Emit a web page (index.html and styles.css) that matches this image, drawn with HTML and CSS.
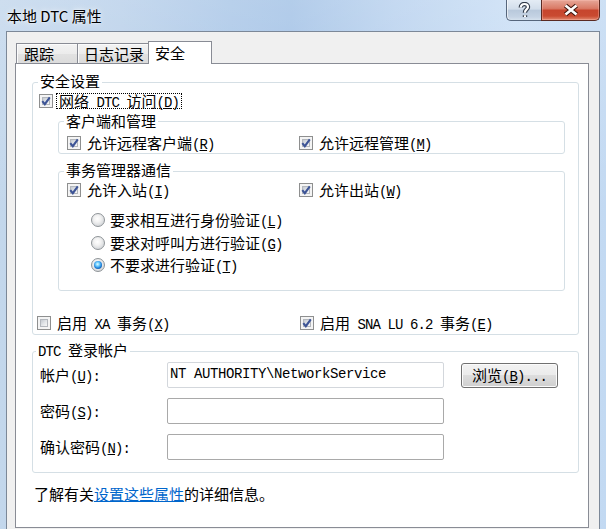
FILE: index.html
```html
<!DOCTYPE html>
<html lang="zh-CN">
<head>
<meta charset="utf-8">
<title>本地 DTC 属性</title>
<link rel="stylesheet" href="styles.css">
</head>
<body>
<div class="window">
  <div class="titlebar">
    <div class="title">本地 DTC 属性</div>
    <div class="caption">
      <div class="cap-btn help">
        <svg width="14" height="17" viewBox="0 0 14 17">
          <path d="M3.8 5.6 C3.8 3.2 5.6 2 7.4 2 C9.6 2 11 3.3 11 5 C11 7.2 8 7.6 8 10.2 V10.8 M8 13.2 V15" fill="none" stroke="#2f3948" stroke-width="4.4"/>
          <path d="M3.8 5.6 C3.8 3.2 5.6 2 7.4 2 C9.6 2 11 3.3 11 5 C11 7.2 8 7.6 8 10.2 V10.8 M8 13.2 V15" fill="none" stroke="#ffffff" stroke-width="2.2"/>
        </svg>
      </div>
      <div class="cap-btn close">
        <svg width="18" height="14" viewBox="0 0 18 14">
          <path d="M3.5 2.5 L14.5 11.5 M14.5 2.5 L3.5 11.5" fill="none" stroke="#3e140c" stroke-width="4.8"/>
          <path d="M3.5 2.5 L14.5 11.5 M14.5 2.5 L3.5 11.5" fill="none" stroke="#ffffff" stroke-width="2.6"/>
        </svg>
      </div>
    </div>
  </div>
  <div class="client">
    <div class="tabs">
      <div class="tab t1">跟踪</div>
      <div class="tab t2">日志记录</div>
      <div class="tab t3 active">安全</div>
    </div>
    <div class="page">
      <div class="group g-sec">
        <div class="legend">安全设置</div>
        <div class="chk r-net">
          <span class="cb"><i></i><svg class="tick" viewBox="0 0 12 12"><path d="M2.3 6.2 L4.8 9.2 L9.8 2.3"/></svg></span>
          <span class="focus">网络<span class="l">&nbsp;DTC&nbsp;</span>访问<span class="l">(<u>D</u>)</span></span>
        </div>
        <div class="group g-client">
          <div class="legend">客户端和管理</div>
          <div class="grid2 r-client">
            <div class="chk">
              <span class="cb"><i></i><svg class="tick" viewBox="0 0 12 12"><path d="M2.3 6.2 L4.8 9.2 L9.8 2.3"/></svg></span>
              <span>允许远程客户端<span class="l">(<u>R</u>)</span></span>
            </div>
            <div class="chk">
              <span class="cb"><i></i><svg class="tick" viewBox="0 0 12 12"><path d="M2.3 6.2 L4.8 9.2 L9.8 2.3"/></svg></span>
              <span>允许远程管理<span class="l">(<u>M</u>)</span></span>
            </div>
          </div>
        </div>
        <div class="group g-txn">
          <div class="legend">事务管理器通信</div>
          <div class="grid2 r-inout">
            <div class="chk">
              <span class="cb"><i></i><svg class="tick" viewBox="0 0 12 12"><path d="M2.3 6.2 L4.8 9.2 L9.8 2.3"/></svg></span>
              <span>允许入站<span class="l">(<u>I</u>)</span></span>
            </div>
            <div class="chk">
              <span class="cb"><i></i><svg class="tick" viewBox="0 0 12 12"><path d="M2.3 6.2 L4.8 9.2 L9.8 2.3"/></svg></span>
              <span>允许出站<span class="l">(<u>W</u>)</span></span>
            </div>
          </div>
          <div class="radios">
            <div class="rad ra1"><span class="rb"></span><span>要求相互进行身份验证<span class="l">(<u>L</u>)</span></span></div>
            <div class="rad ra2"><span class="rb"></span><span>要求对呼叫方进行验证<span class="l">(<u>G</u>)</span></span></div>
            <div class="rad ra3"><span class="rb on"></span><span>不要求进行验证<span class="l">(<u>T</u>)</span></span></div>
          </div>
        </div>
        <div class="grid2 r-xa">
          <div class="chk">
            <span class="cb"><i></i></span>
            <span>启用<span class="l">&nbsp;XA&nbsp;</span>事务<span class="l">(<u>X</u>)</span></span>
          </div>
          <div class="chk">
            <span class="cb"><i></i><svg class="tick" viewBox="0 0 12 12"><path d="M2.3 6.2 L4.8 9.2 L9.8 2.3"/></svg></span>
            <span>启用<span class="l">&nbsp;SNA LU 6.2&nbsp;</span>事务<span class="l">(<u>E</u>)</span></span>
          </div>
        </div>
      </div>

      <div class="group g-acct">
        <div class="legend"><span class="l">DTC&nbsp;</span>登录帐户</div>
        <div class="acct-row first">
          <div class="acct-label">帐户<span class="l">(<u>U</u>):</span></div>
          <div class="input light">NT AUTHORITY\NetworkService</div>
          <div class="button">浏览<span class="l">(<u>B</u>)...</span></div>
        </div>
        <div class="acct-row">
          <div class="acct-label">密码<span class="l">(<u>S</u>):</span></div>
          <div class="input"></div>
        </div>
        <div class="acct-row">
          <div class="acct-label">确认密码<span class="l">(<u>N</u>):</span></div>
          <div class="input"></div>
        </div>
      </div>

      <div class="footer">了解有关<a href="#">设置这些属性</a>的详细信息。</div>
    </div>
  </div>
</div>
</body>
</html>
```

FILE: styles.css
```css
* { box-sizing: border-box; }
html, body { margin: 0; padding: 0; }
body {
  width: 606px;
  height: 529px;
  overflow: hidden;
  font-family: "Noto Sans CJK SC", "Noto Sans", sans-serif;
  font-size: 15px;
  color: #000;
}

.window {
  width: 606px;
  height: 529px;
  overflow: hidden;
  display: flex;
  flex-direction: column;
  padding: 0 6px;
  background:
    linear-gradient(180deg, rgba(255,255,255,0.18) 0%, rgba(255,255,255,0) 40%),
    linear-gradient(90deg, #c3d7ec 0%, #b9d0ea 20%, #a9c6e7 38%, #a3c2e6 48%, #b8d1ee 65%, #c9def5 85%, #c2d9f2 100%);
}

/* ---------- title bar ---------- */
.titlebar {
  height: 31px;
  flex: none;
  display: flex;
  align-items: flex-start;
}
.title {
  margin-left: 1px;
  line-height: 31px;
  font-size: 15px;
  color: #000;
  text-shadow: 0 0 6px rgba(255,255,255,0.9), 0 0 2px rgba(255,255,255,0.8);
}
.caption {
  margin-left: auto;
  display: flex;
}
.cap-btn {
  height: 21px;
  display: flex;
  align-items: center;
  justify-content: center;
  border: 1px solid #56667c;
  border-top: none;
}
.help {
  width: 35px;
  border-right: none;
  border-radius: 0 0 0 5px;
  background: linear-gradient(180deg, #e4ecf5 0%, #d2deeb 45%, #b9c9dc 52%, #c5d3e4 85%, #d6e2ee 100%);
  box-shadow: inset 1px 0 0 rgba(255,255,255,0.6);
}
.close {
  width: 59px;
  border-color: #5a2a22;
  border-radius: 0 0 5px 0;
  background: linear-gradient(180deg, #e7a798 0%, #d97a66 42%, #c7452d 52%, #c94a30 80%, #e2876d 100%);
  box-shadow: inset 0 0 0 1px rgba(255,200,190,0.35);
}

/* ---------- client ---------- */
.client {
  flex: none;
  height: 520px;
  background: #f0f0f0;
  border: 1px solid #7c8898;
  padding: 9px 10px 0 8px;
}

.tabs {
  height: 22px;
  display: flex;
  align-items: flex-end;
  padding-left: 1px;
}
.tab {
  height: 20px;
  border: 1px solid #898c95;
  border-bottom: none;
  line-height: 19px;
  padding-left: 6px;
  background: linear-gradient(180deg, #f3f3f3 0%, #ececec 50%, #e2e2e2 51%, #dcdcdc 100%);
  box-shadow: inset 1px 1px 0 #fbfbfb;
  white-space: nowrap;
}
.t1 { width: 62px; padding-left: 7px; }
.t2 { width: 72px; margin-left: -1px; }
.t3 { width: 64px; margin-left: -1px; }
.tab.active {
  position: relative;
  z-index: 1;
  height: 23px;
  margin-bottom: -1px;
  line-height: 21px;
  background: #fff;
  box-shadow: none;
}

.page {
  height: 465px;
  background: #fff;
  border: 1px solid #898c95;
  padding: 18px 0 0 16px;
}

/* ---------- group boxes ---------- */
.group {
  border: 1px solid #d5dfe5;
  border-radius: 3px;
}
.legend {
  display: table;
  height: 16px;
  margin: -10px 0 0 5px;
  padding: 0 2px;
  line-height: 16px;
  background: #fff;
  white-space: nowrap;
}
.g-sec {
  width: 547px;
  padding-bottom: 3px;
}
.g-client {
  width: 507px;
  margin: 12px 0 0 25px;
  padding-bottom: 2px;
}
.g-client .legend { margin-top: -9px; }
.g-txn {
  width: 507px;
  margin: 17px 0 0 25px;
  padding-bottom: 17px;
}
.g-acct {
  width: 547px;
  margin-top: 16px;
  padding: 0 0 12px 7px;
}
.g-acct .legend { margin-left: -4px; }

/* ---------- checkboxes & radios ---------- */
.l {
  font-family: "Liberation Mono", monospace;
  font-size: 14px;
  letter-spacing: -0.9px;
  line-height: 0;
}
.chk {
  height: 16px;
  display: flex;
  align-items: center;
  gap: 6px;
  line-height: 16px;
  white-space: nowrap;
}
.chk > span:last-child { height: 16px; }
.cb {
  position: relative;
  flex: none;
  width: 14px;
  height: 14px;
  border: 1px solid #8e8f8f;
  padding: 2px;
  background: #f4f4f4;
}
.cb > i {
  display: block;
  width: 8px;
  height: 8px;
  border: 1px solid #b3b7bd;
  background: linear-gradient(135deg, #c4c9d0 0%, #e4e7ea 55%, #f6f6f6 100%);
}
.tick {
  position: absolute;
  left: 0;
  top: 0;
  width: 12px;
  height: 12px;
}
.tick path {
  fill: none;
  stroke: #3d5496;
  stroke-width: 2.1;
}

.r-net {
  margin-top: 4px;
  padding-left: 6px;
  gap: 3px;
}
.focus {
  outline: 1px dotted #000;
  outline-offset: -1px;
  padding: 0 3px;
  line-height: 16px;
}

.grid2 {
  display: grid;
  grid-template-columns: 232px 1fr;
}
.r-client {
  margin-top: 6px;
  padding-left: 8px;
}
.r-inout {
  margin-top: 4px;
  padding-left: 8px;
}
.r-xa {
  margin-top: 24px;
  padding-left: 4px;
  grid-template-columns: 263px 1fr;
}

.radios { padding-left: 32px; }
.rad {
  height: 16px;
  display: flex;
  align-items: center;
  gap: 5px;
  line-height: 16px;
  white-space: nowrap;
}
.rad > span:last-child { height: 16px; }
.ra1 { margin-top: 14px; }
.ra2 { margin-top: 7px; }
.ra3 { margin-top: 6px; }
.rb {
  flex: none;
  width: 14px;
  height: 14px;
  border-radius: 50%;
  border: 1px solid #8f9498;
  background: radial-gradient(circle at 45% 40%, #ffffff 0%, #f2f2f2 35%, #d4d7da 75%, #c3c7cb 100%);
  display: flex;
  align-items: center;
  justify-content: center;
}
.rb.on::after {
  content: "";
  width: 8px;
  height: 8px;
  border-radius: 50%;
  background: radial-gradient(circle at 45% 40%, #e8fbff 0%, #74d2ff 28%, #1f7fd8 60%, #0b2d62 100%);
}

/* ---------- account rows ---------- */
.acct-row {
  display: flex;
  align-items: flex-start;
  height: 26px;
  margin-top: 10px;
}
.acct-row.first { margin-top: 4px; }
.acct-label {
  width: 127px;
  height: 26px;
  line-height: 26px;
  white-space: nowrap;
}
.input {
  width: 277px;
  height: 26px;
  border: 1px solid #a9a9a9;
  border-radius: 2px;
  padding-left: 2px;
  font-family: "Liberation Mono", monospace;
  font-size: 14px;
  letter-spacing: -0.4px;
  line-height: 23px;
  white-space: nowrap;
  background: #fff;
}
.input.light { border-color: #d3d7dc; }
.button {
  width: 97px;
  height: 25px;
  margin: 1px 0 0 17px;
  border: 1px solid #707070;
  border-radius: 3px;
  background: linear-gradient(180deg, #f2f2f2 0%, #ebebeb 49%, #dddddd 50%, #cfcfcf 100%);
  box-shadow: inset 0 0 0 1px #fbfbfb;
  text-align: center;
  line-height: 22px;
  white-space: nowrap;
}

/* ---------- footer ---------- */
.footer {
  margin-top: 13px;
  padding-left: 2px;
  height: 16px;
  line-height: 16px;
}
.footer a {
  color: #0066cc;
  text-decoration: underline;
}
```
